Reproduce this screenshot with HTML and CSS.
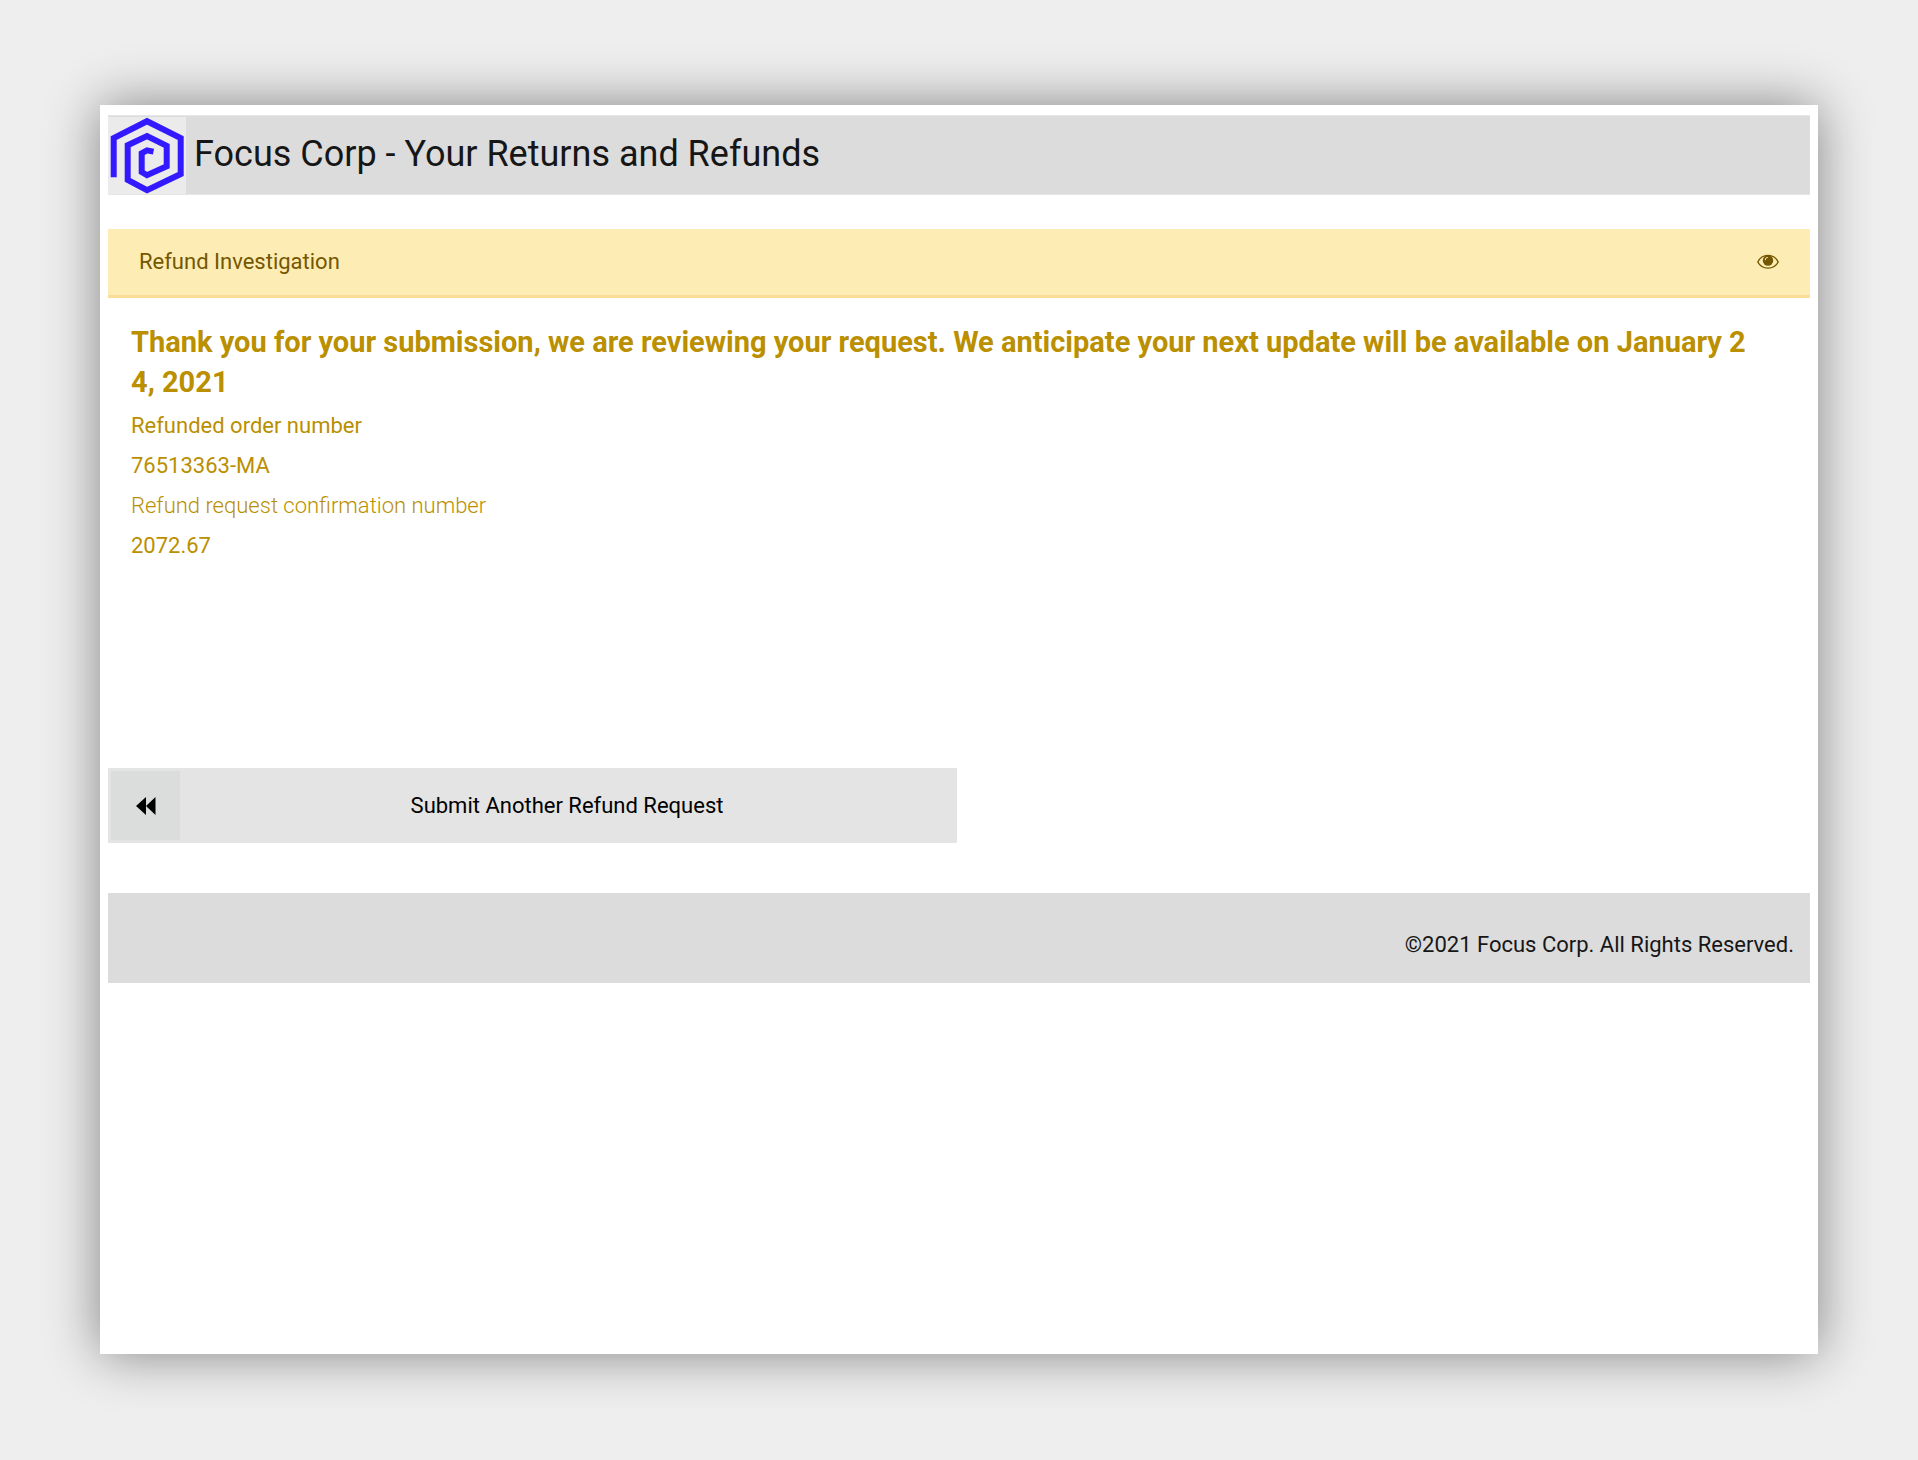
FILE: index.html
```html
<!DOCTYPE html>
<html lang="en">
<head>
<meta charset="utf-8">
<meta name="viewport" content="width=device-width, initial-scale=1">
<title>Focus Corp - Your Returns and Refunds</title>
<link rel="stylesheet" href="styles.css">
</head>
<body>
<div class="panel">
  <header class="site-header">
    <svg class="logo" viewBox="0 0 78 77" aria-hidden="true">
      <path d="M5.7 60.3V21L39 4.2L72.7 21V57L39 73.2L19.7 63V28.2L39 19L58.7 28.8V49.3L39 58.2L33.7 55V36.2L39 33.3L45.5 34.6"/>
    </svg>
    <h1 class="site-title">Focus Corp - Your Returns and Refunds</h1>
  </header>

  <main>
    <div class="banner">
      <h2 class="banner-title">Refund Investigation</h2>
      <svg class="eye" viewBox="0 0 22 16" aria-hidden="true">
        <path class="eye-lid" d="M.8 8C5 -.9 17 -.9 21.200 8C17 16.200 5 16.200 .8 8Z"/>
        <circle class="eye-iris" cx="11" cy="6.500" r="5.200"/>
        <path class="eye-glint" d="M8.200 6.200A2.800 2.800 0 0 1 10.800 3.400"/>
      </svg>
    </div>

    <section class="status">
      <p class="status-lead">Thank you for your submission, we are reviewing your request. We anticipate your next update will be available on January 2<br>4, 2021</p>
      <dl class="details">
        <dt class="term">Refunded order number</dt>
        <dd class="value">76513363-MA</dd>
        <dt class="term light">Refund request confirmation number</dt>
        <dd class="value">2072.67</dd>
      </dl>
    </section>

    <button class="again" type="button">
      <span class="again-icon">
        <svg class="rewind" viewBox="0 0 20 20" aria-hidden="true"><path d="M0 10L10 1V10L19.500 1V19L10 10V19Z"/></svg>
      </span>
      <span class="again-label">Submit Another Refund Request</span>
    </button>
  </main>

  <footer class="site-footer">©2021 Focus Corp. All Rights Reserved.</footer>
</div>
</body>
</html>
```
FILE: styles.css
```css
* {
  box-sizing: border-box;
}

body {
  display: flex;
  min-height: 100vh;
  margin: 0;
  padding: 105px 100px 106px;
  background: #eee;
  color: #161616;
  font-family: Roboto, "Liberation Sans", sans-serif;
  font-size: 22px;
  line-height: 40px;
}

h1, h2, p, dl, dd {
  margin: 0;
  font-weight: 400;
}

.panel {
  flex: 1;
  min-width: 0;
  padding: 10px 8px;
  background: #fff;
  box-shadow: 0 0 50px rgba(0, 0, 0, 0.45);
}

.site-header {
  display: flex;
  align-items: flex-end;
  gap: 8px;
  height: 80px;
  border: solid #e6e6e6;
  border-width: 1px 0;
  background: #dcdcdc;
}

.logo {
  flex: none;
  width: 78px;
  height: 77px;
  background: #ebebeb;
  fill: none;
  stroke: #3319ff;
  stroke-width: 6;
}

.site-title {
  align-self: center;
  padding-bottom: 2px;
  font-size: 36px;
}

.banner {
  display: flex;
  align-items: center;
  justify-content: space-between;
  height: 69px;
  margin-top: 34px;
  padding: 0 31px;
  border-bottom: 3px solid #fbdd98;
  background: #fdedb5;
  color: #745700;
}

.banner-title {
  font-size: 22px;
}

.eye {
  width: 22px;
  height: 16px;
  fill: none;
  stroke: #745700;
  stroke-width: 1.400;
}

.eye-iris {
  fill: #745700;
  stroke: none;
}

.eye-glint {
  stroke: #fdedb5;
  stroke-width: 1;
}

.status {
  min-height: 445px;
  padding: 24px 23px 0;
  color: #ba8f00;
}

.status-lead {
  font-size: 29px;
  font-weight: 700;
}

.details {
  padding-top: 4px;
}

.light {
  font-weight: 300;
}

.again {
  display: flex;
  align-items: center;
  width: calc(50% - 2px);
  height: 75px;
  margin-top: 25px;
  padding: 3px;
  border: 0;
  background: #e4e4e4;
  color: #000;
  font: inherit;
}

.again-icon {
  display: flex;
  flex: none;
  align-items: center;
  justify-content: center;
  width: 69px;
  height: 69px;
  background: #dadddb;
}

.rewind {
  width: 20px;
  height: 20px;
}

.again-label {
  flex: 1;
}

.site-footer {
  height: 90px;
  margin-top: 50px;
  padding: 32px 16px 0;
  background: #dcdcdc;
  text-align: right;
}
```
